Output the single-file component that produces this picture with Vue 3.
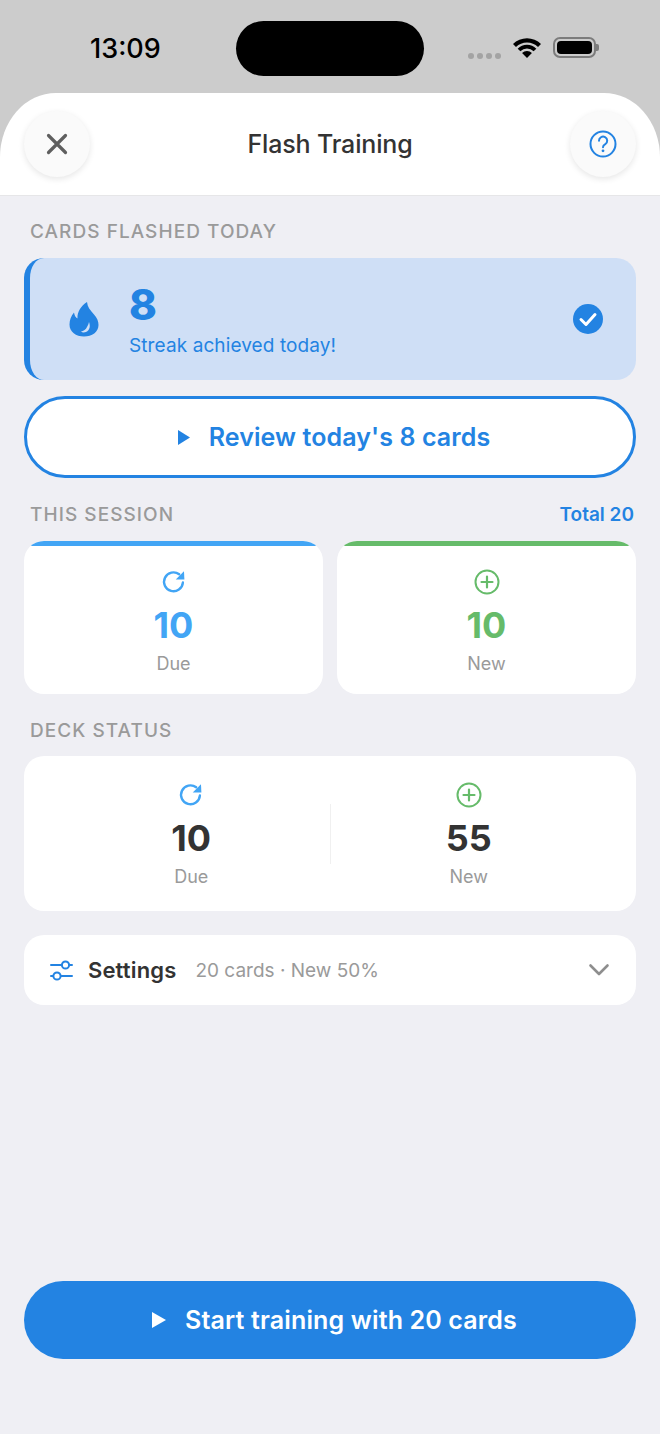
<script setup>
const sessionStats = [
  { key: 'due', value: 10, label: 'Due' },
  { key: 'new', value: 10, label: 'New' },
]
</script>

<template>
  <div class="screen">
    <div class="status-bar">
      <span class="time">13:09</span>
      <div class="island"></div>
      <div class="status-icons">
        <div class="dots"><i></i><i></i><i></i><i></i></div>
        <svg class="wifi" width="28" height="20" viewBox="0 0 28 20">
          <path d="M14 20 L9.05 15.05 A7 7 0 0 1 18.95 15.05 Z M4.67 10.67 A13.2 13.2 0 0 1 23.33 10.67 L20.65 13.35 A9.4 9.4 0 0 0 7.35 13.35 Z M0 6 A19.8 19.8 0 0 1 28 6 L25.03 8.97 A15.6 15.6 0 0 0 2.97 8.97 Z" fill="#000" />
        </svg>
        <div class="battery"><div class="battery-fill"></div></div>
        <div class="battery-cap"></div>
      </div>
    </div>

    <header class="header">
      <button class="round-btn">
        <svg width="26" height="26" viewBox="0 0 26 26">
          <path d="M4.5 4.5 L21.5 21.5 M21.5 4.5 L4.5 21.5" stroke="#5f5f5f" stroke-width="3.2" stroke-linecap="round" />
        </svg>
      </button>
      <h1 class="title">Flash Training</h1>
      <button class="round-btn">
        <svg width="30" height="30" viewBox="0 0 30 30">
          <circle cx="15" cy="15" r="12.5" fill="none" stroke="#2383e2" stroke-width="2" />
          <path d="M11 11.8 A4.1 4.1 0 1 1 17.3 15.2 C15.8 16.1 15 16.8 15 18.3" fill="none" stroke="#2383e2" stroke-width="2" stroke-linecap="round" />
          <circle cx="15" cy="21.8" r="1.4" fill="#2383e2" />
        </svg>
      </button>
    </header>

    <main class="content">
      <h2 class="section-label first">CARDS FLASHED TODAY</h2>
      <div class="streak-card">
        <svg class="flame" width="30" height="36" viewBox="0 0 30 36">
          <path fill-rule="evenodd" d="M18 1 C18.5 6 21 9 25 13.5 C28 17 29.5 20 29.5 24 C29.5 31 23 35.5 15 35.5 C7 35.5 0.5 31 0.5 23.5 C0.5 19 2 15 5 11.5 C5.5 14.5 6.5 16.5 8.5 17.5 C8 11 12 5 18 1 Z M20 21 C21.5 25 21 29 17 31 C15 31.8 13 31.5 12 30.5 C14.5 30 17 28.5 18 26 C19 24.5 19.5 23 20 21 Z" fill="#2383e2" />
        </svg>
        <div class="streak-text">
          <div class="streak-count">8</div>
          <div class="streak-note">Streak achieved today!</div>
        </div>
        <svg width="30" height="30" viewBox="0 0 30 30">
          <circle cx="15" cy="15" r="15" fill="#2383e2" />
          <path d="M8 15.5 L13 20.5 L22 10.5" fill="none" stroke="#fff" stroke-width="3" stroke-linecap="round" stroke-linejoin="round" />
        </svg>
      </div>

      <button class="review-btn">
        <svg width="12" height="15" viewBox="0 0 12 15"><path d="M0 0 L12 7.5 L0 15 Z" fill="#2383e2" /></svg>
        <span>Review today's 8 cards</span>
      </button>

      <div class="section-row">
        <h2 class="section-label">THIS SESSION</h2>
        <span class="total">Total 20</span>
      </div>
      <div class="session-grid">
        <div v-for="stat in sessionStats" :key="stat.key" class="session-card" :class="stat.key">
          <div class="session-bar"></div>
          <svg v-if="stat.key === 'due'" width="26" height="26" viewBox="1 1 24 24">
            <path d="M21.2 13.5 A8.7 8.7 0 1 1 17.8 5.9" fill="none" stroke="currentColor" stroke-width="2.2" stroke-linecap="round" />
            <path d="M14.6 10.6 L22.6 10.8 L22.2 3 Z" fill="currentColor" />
          </svg>
          <svg v-else width="26" height="26" viewBox="0 0 26 26">
            <circle cx="13" cy="13" r="11.5" fill="none" stroke="currentColor" stroke-width="2" />
            <path d="M13 7.5 V18.5 M7.5 13 H18.5" stroke="currentColor" stroke-width="2.2" stroke-linecap="round" />
          </svg>
          <div class="stat-value">{{ stat.value }}</div>
          <div class="stat-label">{{ stat.label }}</div>
        </div>
      </div>

      <h2 class="section-label deck-label">DECK STATUS</h2>
      <div class="deck-card">
        <div class="deck-col">
          <svg class="due-icon" width="26" height="26" viewBox="1 1 24 24">
            <path d="M21.2 13.5 A8.7 8.7 0 1 1 17.8 5.9" fill="none" stroke="currentColor" stroke-width="2.2" stroke-linecap="round" />
            <path d="M14.6 10.6 L22.6 10.8 L22.2 3 Z" fill="currentColor" />
          </svg>
          <div class="stat-value dark">10</div>
          <div class="stat-label">Due</div>
        </div>
        <div class="deck-divider"></div>
        <div class="deck-col">
          <svg class="new-icon" width="26" height="26" viewBox="0 0 26 26">
            <circle cx="13" cy="13" r="11.5" fill="none" stroke="currentColor" stroke-width="2" />
            <path d="M13 7.5 V18.5 M7.5 13 H18.5" stroke="currentColor" stroke-width="2.2" stroke-linecap="round" />
          </svg>
          <div class="stat-value dark">55</div>
          <div class="stat-label">New</div>
        </div>
      </div>

      <div class="settings-card">
        <svg width="23" height="21" viewBox="0 0 23 21">
          <path d="M1 5 H11.5 M20 5 H22 M1 16 H3 M11.5 16 H22" stroke="#2383e2" stroke-width="2" stroke-linecap="round" />
          <circle cx="15.5" cy="5" r="3.6" fill="none" stroke="#2383e2" stroke-width="2" />
          <circle cx="7" cy="16" r="3.6" fill="none" stroke="#2383e2" stroke-width="2" />
        </svg>
        <span class="settings-title">Settings</span>
        <span class="settings-info">20 cards · New 50%</span>
        <svg class="chevron" width="22" height="14" viewBox="0 0 22 14">
          <path d="M2.5 2.5 L11 11 L19.5 2.5" fill="none" stroke="#8e8e8e" stroke-width="2.6" stroke-linecap="round" stroke-linejoin="round" />
        </svg>
      </div>

      <button class="start-btn">
        <svg width="14" height="16" viewBox="0 0 14 16"><path d="M0 0 L14 8 L0 16 Z" fill="#fff" /></svg>
        <span>Start training with 20 cards</span>
      </button>
    </main>
  </div>
</template>

<style>
html, body {
  margin: 0;
  background: #cccccc;
}
</style>

<style scoped>
.screen {
  width: 660px;
  height: 1434px;
  display: flex;
  flex-direction: column;
  background: #cccccc;
  font-family: Inter, "Liberation Sans", sans-serif;
  overflow: hidden;
}

.status-bar {
  height: 93px;
  flex: none;
  position: relative;
}

.time {
  position: absolute;
  left: 90px;
  top: 33px;
  font-size: 27px;
  line-height: 32px;
  font-weight: 500;
  color: #000;
}

.island {
  position: absolute;
  left: 236px;
  top: 21px;
  width: 188px;
  height: 55px;
  border-radius: 28px;
  background: #000;
}

.status-icons {
  position: absolute;
  left: 468px;
  top: 0;
}

.dots {
  position: absolute;
  left: 0;
  top: 53px;
  display: flex;
  gap: 3px;
}

.dots i {
  width: 6px;
  height: 6px;
  border-radius: 50%;
  background: #a3a3a3;
}

.wifi {
  position: absolute;
  left: 45px;
  top: 38px;
}

.battery {
  position: absolute;
  left: 85px;
  top: 37px;
  width: 43px;
  height: 21px;
  box-sizing: border-box;
  border: 2px solid #7c7c7c;
  border-radius: 7px;
  padding: 2px;
}

.battery-fill {
  height: 100%;
  border-radius: 4px;
  background: #000;
}

.battery-cap {
  position: absolute;
  left: 128px;
  top: 44px;
  width: 3px;
  height: 7px;
  border-radius: 0 2px 2px 0;
  background: #7c7c7c;
}

.header {
  height: 103px;
  flex: none;
  box-sizing: border-box;
  padding: 18px 24px 0;
  display: flex;
  justify-content: space-between;
  align-items: flex-start;
  background: #fff;
  border-bottom: 1px solid #e6e6e8;
  border-radius: 56px 56px 0 0 / 64px 64px 0 0;
}

.round-btn {
  width: 66px;
  height: 66px;
  padding: 0;
  border: none;
  border-radius: 50%;
  background: #fafafa;
  box-shadow: 0 2px 6px rgba(0, 0, 0, 0.1);
  display: flex;
  align-items: center;
  justify-content: center;
}

.title {
  margin: 17px 0 0;
  font-size: 25px;
  line-height: 32px;
  font-weight: 500;
  letter-spacing: -0.15px;
  color: #333;
}

.content {
  flex: 1;
  padding: 0 24px;
  background: #efeff4;
  display: flex;
  flex-direction: column;
}

.section-label {
  margin: 0 0 0 6px;
  font-size: 19px;
  line-height: 22px;
  font-weight: 500;
  letter-spacing: 1.05px;
  color: #9a9a9a;
}

.section-label.first {
  margin-top: 25px;
}

.streak-card {
  margin-top: 15px;
  height: 122px;
  box-sizing: border-box;
  padding: 0 33px 0 39px;
  display: flex;
  align-items: center;
  background: #cfdff6;
  border-left: 6px solid #2383e2;
  border-radius: 20px;
}

.streak-text {
  margin-left: 30px;
  padding-top: 2px;
  flex: 1;
}

.streak-count {
  font-size: 42px;
  line-height: 46px;
  font-weight: 800;
  color: #2383e2;
}

.streak-note {
  margin-top: 6px;
  font-size: 19px;
  line-height: 24px;
  letter-spacing: 0.1px;
  color: #2383e2;
}

.review-btn {
  margin-top: 16px;
  height: 82px;
  box-sizing: border-box;
  padding: 0 0 0 8px;
  border: 3px solid #2383e2;
  border-radius: 41px;
  background: #fff;
  color: #2383e2;
  font-family: inherit;
  font-size: 25px;
  font-weight: 600;
  letter-spacing: 0.1px;
  display: flex;
  align-items: center;
  justify-content: center;
  gap: 19px;
}

.section-row {
  margin-top: 26px;
  display: flex;
  justify-content: space-between;
  align-items: center;
}

.total {
  margin-right: 2px;
  font-size: 19px;
  line-height: 22px;
  font-weight: 600;
  color: #2383e2;
}

.session-grid {
  margin-top: 15px;
  display: grid;
  grid-template-columns: 1fr 1fr;
  gap: 14px;
}

.session-card {
  height: 153px;
  box-sizing: border-box;
  padding-top: 28px;
  border-radius: 20px;
  background: #fff;
  display: flex;
  flex-direction: column;
  align-items: center;
  position: relative;
  overflow: hidden;
}

.session-bar {
  position: absolute;
  left: 0;
  right: 0;
  top: 0;
  height: 5px;
  background: currentColor;
}

.session-card.due {
  color: #42a5f5;
}

.session-card.new {
  color: #66bb6a;
}

.stat-value {
  margin-top: 9px;
  font-size: 36px;
  line-height: 42px;
  font-weight: 700;
}

.stat-value.dark {
  color: #333;
}

.stat-label {
  margin-top: 7px;
  font-size: 18px;
  line-height: 22px;
  color: #9a9a9a;
}

.deck-label {
  margin-top: 26px;
}

.deck-card {
  margin-top: 14px;
  height: 155px;
  box-sizing: border-box;
  padding: 26px 29px 0;
  border-radius: 20px;
  background: #fff;
  display: flex;
  align-items: flex-start;
}

.deck-col {
  flex: 1;
  display: flex;
  flex-direction: column;
  align-items: center;
}

.due-icon {
  color: #42a5f5;
}

.new-icon {
  color: #66bb6a;
}

.deck-divider {
  width: 1px;
  height: 60px;
  margin-top: 22px;
  background: #f0f0f0;
}

.settings-card {
  margin-top: 24px;
  height: 70px;
  box-sizing: border-box;
  padding: 0 26px 0 26px;
  border-radius: 20px;
  background: #fff;
  display: flex;
  align-items: center;
}

.settings-title {
  margin-left: 15px;
  font-size: 22px;
  font-weight: 600;
  letter-spacing: 0.15px;
  color: #333;
}

.settings-info {
  margin-left: 19px;
  font-size: 19px;
  color: #9a9a9a;
}

.chevron {
  margin-left: auto;
}

.start-btn {
  margin-top: 276px;
  height: 78px;
  padding: 0 0 0 9px;
  border: none;
  border-radius: 39px;
  background: #2383e2;
  color: #fff;
  font-family: inherit;
  font-size: 25px;
  font-weight: 600;
  letter-spacing: 0.15px;
  display: flex;
  align-items: center;
  justify-content: center;
  gap: 19px;
}
</style>
